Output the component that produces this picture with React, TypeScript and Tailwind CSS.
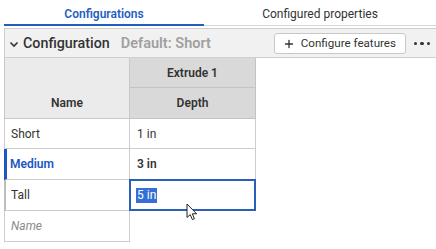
import { Plus } from 'lucide-react';

function Cursor() {
    return (
        <svg className="absolute left-[186px] top-[203px]" width="12" height="18" viewBox="0 0 12 18">
            <path d="M1 1 L1 14.5 L4.2 11.6 L6.4 16.6 L8.4 15.7 L6.3 10.8 L10.6 10.8 Z" fill="#fff" stroke="#222" strokeWidth="1" strokeLinejoin="round" />
        </svg>
    );
}

export default function App() {
    return (
        <div className="relative w-[436px] h-[249px] bg-white text-[#333] overflow-hidden" style={{ fontFamily: 'Roboto, "Liberation Sans", sans-serif' }}>
            {/* tabs */}
            <div className="flex h-[26px] pl-[4px]">
                <div className="w-[200px] flex items-center justify-center text-[12px] font-semibold text-[#1f5fbf] border-b-2 border-[#1f5fbf] pt-[3px]">
                    Configurations
                </div>
                <div className="flex-1 flex items-center justify-center text-[12px] text-[#333] border-b border-[#d6d6d6] pt-[3px]">
                    Configured properties
                </div>
            </div>

            {/* configuration header */}
            <div className="mt-[2px] ml-[4px] h-[30px] flex items-center bg-[#f1f1f1] border-t border-l border-b border-[#cfcfcf]">
                <svg className="ml-[4px] mt-[1px]" width="10" height="10" viewBox="0 0 10 10">
                    <path d="M1.5 3.5 L5 7 L8.5 3.5" fill="none" stroke="#333" strokeWidth="1.6" />
                </svg>
                <span className="ml-[4px] mt-[1px] text-[14.3px] font-medium text-[#333]">Configuration</span>
                <span className="ml-[11px] mt-[1px] text-[14.5px] font-semibold text-[#a0a0a0]">Default: Short</span>
                <div className="ml-auto mt-[1px] h-[21px] flex items-center gap-[6px] pl-[8px] pr-[9px] bg-white border border-[#c8c8c8] rounded-[3px] text-[11.6px] text-[#333]">
                    <Plus size={12} strokeWidth={2.6} />
                    Configure features
                </div>
                <div className="w-[30px] pl-[2px] mt-[1px] flex items-center justify-center gap-[3px]">
                    <span className="w-[3.5px] h-[3.5px] rounded-full bg-[#333]" />
                    <span className="w-[3.5px] h-[3.5px] rounded-full bg-[#333]" />
                    <span className="w-[3.5px] h-[3.5px] rounded-full bg-[#333]" />
                </div>
            </div>

            {/* table */}
            <div className="ml-[4px] w-[252px] text-[12px]">
                <div className="flex">
                    <div className="w-[126px] h-[61px] flex items-end justify-center pb-[6px] bg-[#ebebeb] border-l border-r border-b border-[#c8c8c8] font-semibold text-[#333]">
                        Name
                    </div>
                    <div className="w-[126px] flex flex-col">
                        <div className="h-[30px] flex items-center justify-center bg-[#d9d9d9] border-r border-b border-[#c4c4c4] font-semibold">Extrude 1</div>
                        <div className="h-[31px] flex items-center justify-center bg-[#d9d9d9] border-r border-b border-[#c4c4c4] font-semibold">Depth</div>
                    </div>
                </div>
                <div className="flex h-[30px]">
                    <div className="w-[126px] flex items-center pl-[6px] border-l border-r border-b border-[#cdcdcd]">Short</div>
                    <div className="w-[126px] flex items-center pl-[7px] border-r border-b border-[#cdcdcd]">1 in</div>
                </div>
                <div className="flex h-[31px]">
                    <div className="w-[126px] flex items-center pl-[3px] border-l-[3px] border-l-[#1a56c4] border-r border-b border-[#cdcdcd] font-semibold text-[#1a56c4]">Medium</div>
                    <div className="w-[126px] flex items-center pl-[7px] border-r border-b border-[#cdcdcd] font-semibold">3 in</div>
                </div>
                <div className="flex h-[31px]">
                    <div className="w-[126px] flex items-center pl-[5px] border-l-2 border-l-[#bdbdbd] border-r border-b border-[#cdcdcd]">Tall</div>
                    <div className="flex items-center pl-[5px] border-2 border-[#2a5fb8] -mt-[1px] -ml-[1px] h-[32px] w-[127px] bg-white">
                        <span className="bg-[#3470d6] text-white leading-[15px] px-[1px]">5 in</span>
                    </div>
                </div>
                <div className="flex h-[31px]">
                    <div className="w-[126px] flex items-center pl-[6px] border-l border-r border-b border-[#cdcdcd] italic text-[#8a8a8a]">Name</div>
                </div>
            </div>
            <Cursor />
        </div>
    );
}
